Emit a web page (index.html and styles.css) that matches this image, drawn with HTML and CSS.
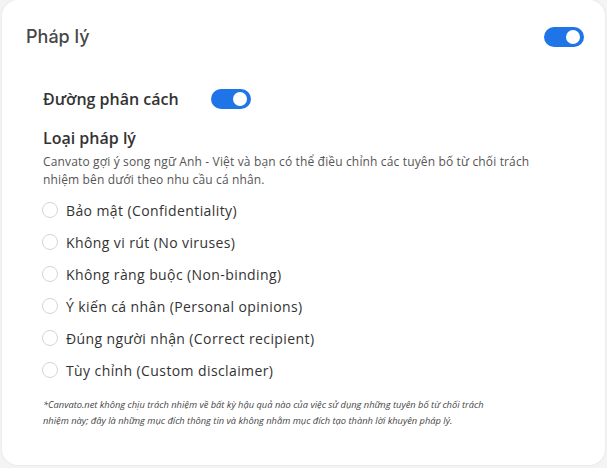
FILE: index.html
```html
<!DOCTYPE html>
<html lang="vi">
<head>
    <meta charset="UTF-8">
    <meta name="viewport" content="width=device-width, initial-scale=1.0">
    <title>Pháp lý</title>
    <link rel="stylesheet" href="styles.css">
</head>
<body>
<div class="card">
    <div class="card-header">
        <h2>Pháp lý</h2>
        <label class="switch">
            <input type="checkbox" checked>
            <span class="slider"></span>
        </label>
    </div>

    <div class="card-body">
        <div class="divider-row">
            <span class="divider-label">Đường phân cách</span>
            <label class="switch">
                <input type="checkbox" checked>
                <span class="slider"></span>
            </label>
        </div>

        <h3>Loại pháp lý</h3>
        <p class="hint">Canvato gợi ý song ngữ Anh - Việt và bạn có thể điều chỉnh các tuyên bố từ chối trách nhiệm bên dưới theo nhu cầu cá nhân.</p>

        <ul class="options">
            <li><label><input type="radio" name="legal"><span>Bảo mật (Confidentiality)</span></label></li>
            <li><label><input type="radio" name="legal"><span>Không vi rút (No viruses)</span></label></li>
            <li><label><input type="radio" name="legal"><span>Không ràng buộc (Non-binding)</span></label></li>
            <li><label><input type="radio" name="legal"><span>Ý kiến cá nhân (Personal opinions)</span></label></li>
            <li><label><input type="radio" name="legal"><span>Đúng người nhận (Correct recipient)</span></label></li>
            <li><label><input type="radio" name="legal"><span>Tùy chỉnh (Custom disclaimer)</span></label></li>
        </ul>

        <p class="note">*Canvato.net không chịu trách nhiệm về bất kỳ hậu quả nào của việc sử dụng những tuyên bố từ chối trách nhiệm này; đây là những mục đích thông tin và không nhằm mục đích tạo thành lời khuyên pháp lý.</p>
    </div>
</div>
</body>
</html>
```

FILE: styles.css
```css
body {
    background-color: #f4f4f4;
    font-family: "Open Sans", "Noto Sans", sans-serif;
    margin: 0;
    padding: 0 2px 3px 2px;
}

.card {
    background-color: #fff;
    border-radius: 16px;
    box-shadow: 0 0 3px rgba(0, 0, 0, 0.08);
    height: 465px;
    box-sizing: border-box;
    padding: 26px 21px 0 24px;
}

.card-header {
    display: flex;
    align-items: center;
    justify-content: space-between;
}

h2 {
    font-family: Inter, "Noto Sans", sans-serif;
    font-size: 18px;
    font-weight: 500;
    color: #474747;
    margin: 0;
    line-height: 22px;
}

.switch {
    position: relative;
    display: inline-block;
    width: 40px;
    height: 20px;
}

.switch input {
    display: none;
}

.slider {
    position: absolute;
    inset: 0;
    background-color: #1f74e8;
    border-radius: 10px;
}

.slider::after {
    content: "";
    position: absolute;
    right: 4px;
    top: 3px;
    width: 14px;
    height: 14px;
    border-radius: 50%;
    background-color: #fff;
}

.card-body {
    padding: 40px 0 0 17px;
}

.divider-row {
    display: flex;
    align-items: center;
    gap: 32px;
}

.divider-label, h3 {
    font-size: 16px;
    font-weight: 600;
    color: #333;
}

h3 {
    margin: 16px 0 0;
    line-height: 24px;
}

.hint {
    font-size: 12px;
    letter-spacing: 0.15px;
    color: #555;
    line-height: 18px;
    margin: 3px 0 5px;
    max-width: 500px;
}

.options {
    list-style: none;
    margin: 0;
    padding: 0;
}

.options li {
    height: 32px;
    display: flex;
    align-items: center;
}

.options label {
    display: flex;
    align-items: center;
    gap: 8px;
    font-size: 14px;
    letter-spacing: 0.4px;
    color: #333;
}

.options input {
    appearance: none;
    width: 16px;
    height: 16px;
    margin: 0 0 0 -1px;
    border: 1px solid #d4d4d4;
    border-radius: 50%;
}

.note {
    font-size: 9.3px;
    font-style: italic;
    color: #444;
    line-height: 16px;
    margin: 11px 0 0;
    max-width: 450px;
}
```
